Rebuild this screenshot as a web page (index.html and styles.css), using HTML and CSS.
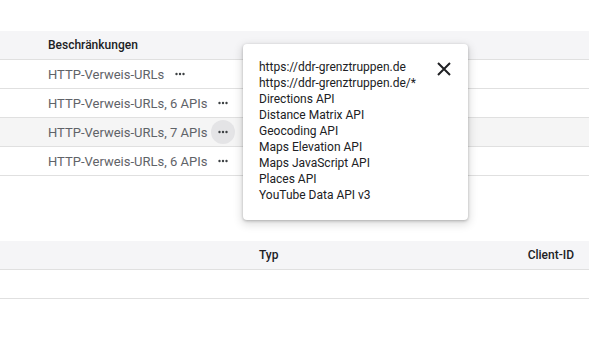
FILE: index.html
```html
<!DOCTYPE html>
<html lang="de">
<head>
    <meta charset="UTF-8" />
    <meta name="viewport" content="width=device-width, initial-scale=1.0"/>
    <title>API-Schlüssel</title>
    <link rel="stylesheet" href="styles.css">
</head>
<body>
    <div class="keys">
        <div class="row head">
            <div class="cell">Beschränkungen</div>
        </div>
        <div class="row">
            <div class="cell">HTTP-Verweis-URLs <button class="more"><svg width="10" height="4" viewBox="0 0 10 4"><circle cx="1.5" cy="2" r="1.2"/><circle cx="5" cy="2" r="1.2"/><circle cx="8.5" cy="2" r="1.2"/></svg></button></div>
        </div>
        <div class="row">
            <div class="cell">HTTP-Verweis-URLs, 6 APIs <button class="more"><svg width="10" height="4" viewBox="0 0 10 4"><circle cx="1.5" cy="2" r="1.2"/><circle cx="5" cy="2" r="1.2"/><circle cx="8.5" cy="2" r="1.2"/></svg></button></div>
        </div>
        <div class="row hover">
            <div class="cell">HTTP-Verweis-URLs, 7 APIs <button class="more active"><svg width="10" height="4" viewBox="0 0 10 4"><circle cx="1.5" cy="2" r="1.2"/><circle cx="5" cy="2" r="1.2"/><circle cx="8.5" cy="2" r="1.2"/></svg></button></div>
        </div>
        <div class="row">
            <div class="cell">HTTP-Verweis-URLs, 6 APIs <button class="more"><svg width="10" height="4" viewBox="0 0 10 4"><circle cx="1.5" cy="2" r="1.2"/><circle cx="5" cy="2" r="1.2"/><circle cx="8.5" cy="2" r="1.2"/></svg></button></div>
        </div>
    </div>

    <div class="clients">
        <div class="row head">
            <div class="type">Typ</div>
            <div class="client-id">Client-ID</div>
        </div>
        <div class="row"></div>
    </div>

    <div class="popup">
        <button class="close"><svg width="14" height="14" viewBox="0 0 14 14"><path d="M1 1 L13 13 M13 1 L1 13" stroke="#202124" stroke-width="2"/></svg></button>
        <ul>
            <li>https://ddr-grenztruppen.de</li>
            <li>https://ddr-grenztruppen.de/*</li>
            <li>Directions API</li>
            <li>Distance Matrix API</li>
            <li>Geocoding API</li>
            <li>Maps Elevation API</li>
            <li>Maps JavaScript API</li>
            <li>Places API</li>
            <li>YouTube Data API v3</li>
        </ul>
    </div>
</body>
</html>
```

FILE: styles.css
```css
body {
    font-family: Roboto, "Liberation Sans", sans-serif;
    font-size: 13px;
    background-color: #fff;
    color: #202124;
    margin: 0;
    padding: 0;
}
.keys {
    margin-top: 31px;
}
.row {
    display: flex;
    align-items: center;
    height: 28px;
    border-bottom: 1px solid #e0e0e0;
}
.row.head {
    background-color: #f5f5f7;
    font-size: 12px;
    font-weight: 500;
    color: #202124;
}
.row.hover {
    background-color: #f5f5f5;
}
.keys .cell {
    padding-left: 48px;
    display: flex;
    align-items: center;
    color: #5f6368;
}
.keys .head .cell {
    color: #202124;
}
.more {
    width: 24px;
    height: 24px;
    margin-left: 4px;
    border: none;
    border-radius: 50%;
    background: transparent;
    padding: 0;
    display: flex;
    align-items: center;
    justify-content: center;
    fill: #3c4043;
}
.more.active {
    background-color: #e4e4e6;
}
.clients {
    margin-top: 65px;
}
.clients .type {
    margin-left: 259px;
    flex: 1;
}
.clients .client-id {
    padding-right: 15px;
}
.popup {
    position: absolute;
    left: 243px;
    top: 44px;
    width: 225px;
    height: 176px;
    box-sizing: border-box;
    padding: 15px 16px 16px;
    background-color: #fff;
    border-radius: 4px;
    box-shadow: 0 1px 3px rgba(0, 0, 0, 0.25), 0 3px 8px 2px rgba(0, 0, 0, 0.12);
}
.popup ul {
    list-style: none;
    margin: 0;
    padding: 0;
}
.popup li {
    font-size: 12px;
    line-height: 16px;
    color: #202124;
}
.close {
    position: absolute;
    top: 13px;
    right: 12px;
    width: 24px;
    height: 24px;
    padding: 0;
    border: none;
    background: transparent;
    display: flex;
    align-items: center;
    justify-content: center;
}
```
